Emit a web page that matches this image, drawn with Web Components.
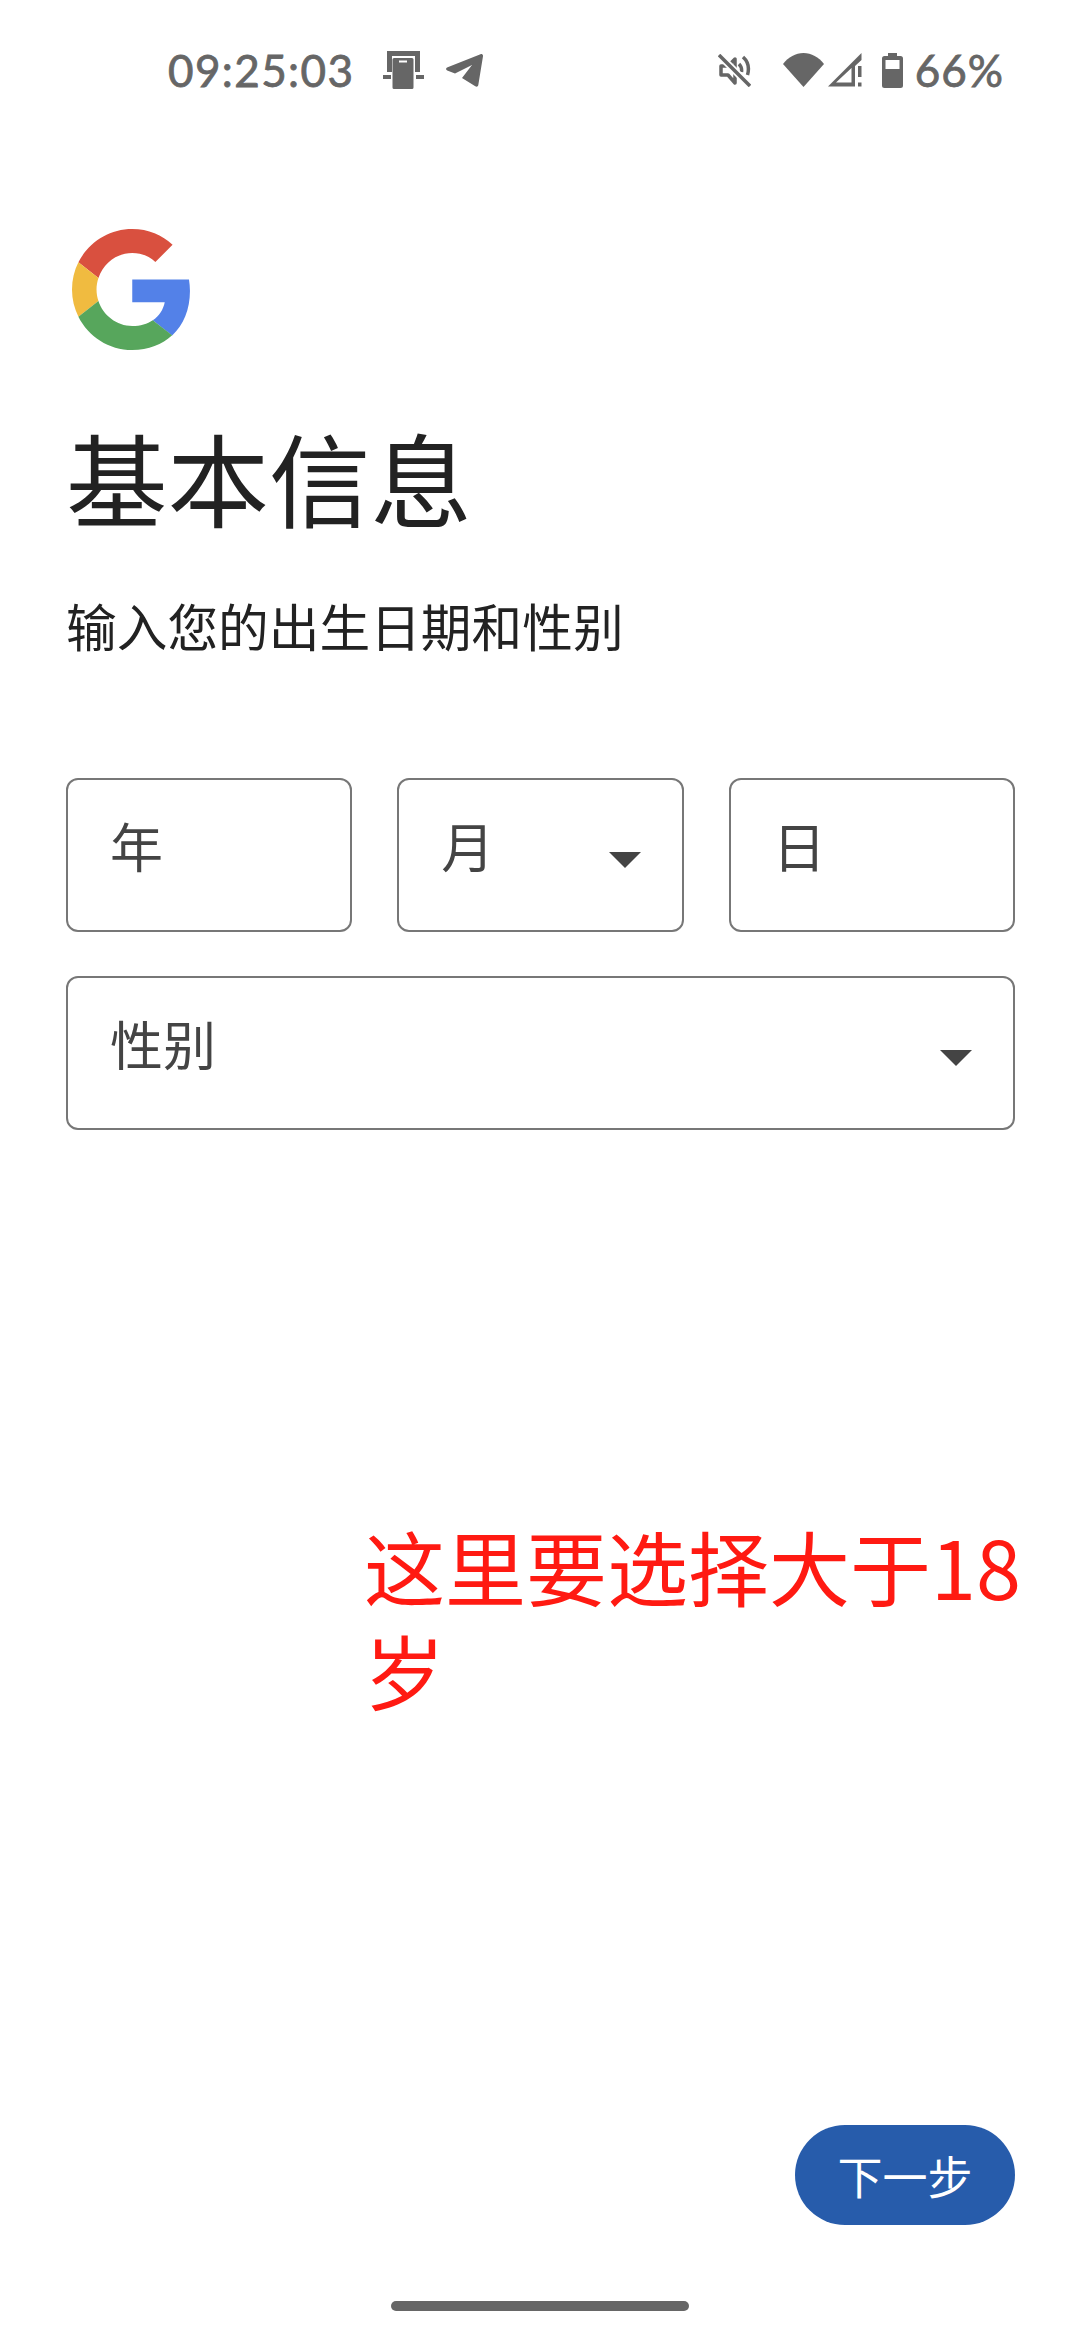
<!DOCTYPE html>
<html lang="zh-CN">
<head>
<meta charset="utf-8">
<title>基本信息</title>
<style>
  html, body { margin: 0; background: #fff; }
  body { font-family: "Noto Sans CJK SC", "Noto Sans", sans-serif; }
</style>
</head>
<body>
<signup-page>
  <status-bar slot="status" time="09:25:03" battery="66%"></status-bar>
  <span slot="title">基本信息</span>
  <span slot="subtitle">输入您的出生日期和性别</span>
  <date-row slot="form">
    <form-field>年</form-field>
    <form-field arrow>月</form-field>
    <form-field>日</form-field>
  </date-row>
  <form-field slot="form" arrow wide>性别</form-field>
  <span slot="note">这里要选择大于18岁</span>
  <pill-button slot="action">下一步</pill-button>
</signup-page>

<script>
// Top bar of the phone, the icons are drawn by hand
class StatusBar extends HTMLElement {
  constructor() {
    super();
    this._shadowRoot = this.attachShadow({ mode: 'open' });
  }
  connectedCallback() {
    this._shadowRoot.innerHTML = `
    <style>
      :host {
        display: flex;
        align-items: center;
        height: 140px;
        padding: 0 76px 0 168px;
        box-sizing: border-box;
        color: #666;
        font: 400 44px Lato, "Liberation Sans", sans-serif;
        -webkit-text-stroke: 0.8px #666;
      }
      svg { display: block; fill: #666; flex: none; }
      .time { letter-spacing: 1.4px; width: 182px; white-space: nowrap; }
      .pct { letter-spacing: 1px; margin-left: 12px; }
      .spacer { flex: 1; }
    </style>
    <span class="time">${this.getAttribute('time')}</span>
    <svg style="margin-left:33px" width="41" height="38" viewBox="0 0 41 38">
      <path d="M4 0h33v21h-5V5H9v16H4z"/><path d="M0 24h8v4H0zM33 24h8v4h-8z"/>
      <path fill-rule="evenodd" d="M11 7h18a1.500 1.500 0 0 1 1.500 1.500v28a1.500 1.500 0 0 1-1.500 1.500H11a1.500 1.500 0 0 1-1.500-1.500v-28A1.500 1.500 0 0 1 11 7zm5 2.500v2h8v-2z"/>
    </svg>
    <svg style="margin-left:22px" width="37" height="33" viewBox="0 0 37 33">
      <path d="M1 13.500L34.500.2C36 -.3 37.200.7 37 2.200L32.300 31C32 32.600 30.700 33.200 29.300 32.300L16 24 26 11 9 19.500 1.200 16.500C-.3 15.800-.3 14.200 1 13.500z"/>
    </svg>
    <span class="spacer"></span>
    <svg width="33" height="33" viewBox="0 0 33 33">
      <path fill="none" stroke="#666" stroke-width="3.500" stroke-linejoin="round" d="M3 12h7l7-7v24l-7-8H3z"/>
      <path fill="none" stroke="#666" stroke-width="3.500" d="M21 10c2 2 3 4.500 2.500 8M25 3c5 4.500 6.500 11 4.500 18"/>
      <path fill="none" stroke="#fff" stroke-width="7" d="M3 3l27 27"/>
      <path fill="none" stroke="#666" stroke-width="3.500" d="M1 1l31 31"/>
    </svg>
    <svg style="margin-left:32px" width="41" height="34" viewBox="0 0 41 34">
      <path d="M0 11C5.500 4 12.500 0 20.500 0S35.500 4 41 11L20.500 34z"/>
    </svg>
    <svg style="margin-left:4px" width="34" height="34" viewBox="0 0 34 34">
      <path fill-rule="evenodd" d="M0 33.500L33.500 0v7L27 13v20.500zM8 29.500h15.500V15z"/>
      <path d="M30 13h3.500v11H30zM30 29.500h3.500v4H30z"/>
    </svg>
    <svg style="margin-left:20px" width="21" height="35" viewBox="0 0 21 35">
      <path fill-rule="evenodd" d="M6 0h9v3h3.500A2.500 2.500 0 0 1 21 5.500V32.500A2.500 2.500 0 0 1 18.500 35h-16A2.500 2.500 0 0 1 0 32.500V5.500A2.500 2.500 0 0 1 2.500 3H6zM3.500 7v9h14V7z"/>
    </svg>
    <span class="pct">${this.getAttribute('battery')}</span>
    `;
  }
}

// Outlined field, with an optional dropdown arrow
class FormField extends HTMLElement {
  constructor() {
    super();
    this._shadowRoot = this.attachShadow({ mode: 'open' });
  }
  connectedCallback() {
    const arrow = this.hasAttribute('arrow')
      ? '<svg width="32" height="16" viewBox="0 0 32 16"><path d="M0 0h32L16 16z"/></svg>'
      : '';
    this._shadowRoot.innerHTML = `
    <style>
      :host {
        display: flex;
        justify-content: space-between;
        box-sizing: border-box;
        height: 154px;
        padding: 0 41px 0 42px;
        border: 2px solid #777;
        border-radius: 12px;
        color: #444;
        font-size: 53px;
        line-height: 72px;
      }
      .label { padding-top: 29px; }
      svg { display: block; fill: #444; margin-top: 72px; }
    </style>
    <span class="label"><slot></slot></span>
    ${arrow}
    `;
  }
}

class DateRow extends HTMLElement {
  constructor() {
    super();
    this._shadowRoot = this.attachShadow({ mode: 'open' });
    this._shadowRoot.innerHTML = `
    <style>
      :host {
        display: grid;
        grid-template-columns: repeat(3, 1fr);
        gap: 45px;
      }
    </style>
    <slot></slot>
    `;
  }
}

class PillButton extends HTMLElement {
  constructor() {
    super();
    this._shadowRoot = this.attachShadow({ mode: 'open' });
    this._shadowRoot.innerHTML = `
    <style>
      :host {
        display: flex;
        align-items: center;
        justify-content: center;
        width: 220px;
        height: 100px;
        border-radius: 50px;
        background: #275cab;
        color: #fff;
        font-size: 45px;
      }
    </style>
    <slot></slot>
    `;
  }
}

// Whole screen: header, form, and the footer pushed to the bottom
class SignupPage extends HTMLElement {
  constructor() {
    super();
    this._shadowRoot = this.attachShadow({ mode: 'open' });
    this._shadowRoot.innerHTML = `
    <style>
      :host {
        display: flex;
        flex-direction: column;
        position: relative;
        height: 2340px;
        overflow: hidden;
      }
      .logo { display: block; margin: 89px 0 0 72px; }
      .content { display: flex; flex-direction: column; padding: 0 65px 0 66px; }
      h1 {
        margin: 54px 0 0;
        font-size: 101.500px;
        line-height: 144px;
        font-weight: 400;
        color: #222;
      }
      p {
        margin: 41px 0 0;
        font-size: 50.700px;
        line-height: 72px;
        color: #222;
      }
      .form {
        display: flex;
        flex-direction: column;
        gap: 44px;
        margin-top: 117px;
      }
      .note {
        position: absolute;
        left: 364px;
        top: 1513px;
        width: 680px;
        color: #ff1a12;
        font-size: 81px;
        line-height: 104px;
      }
      .footer {
        display: flex;
        justify-content: flex-end;
        margin-top: auto;
        padding: 0 65px;
      }
      .home {
        align-self: center;
        width: 298px;
        height: 10px;
        margin: 76px 0 29px;
        border-radius: 5px;
        background: #666;
      }
    </style>
    <slot name="status"></slot>
    <svg class="logo" width="118" height="121" viewBox="0 0 47 48" preserveAspectRatio="none">
      <path fill="#d9503f" d="M24 9.500c3.540 0 6.710 1.220 9.210 3.600l6.850-6.850C35.900 2.380 30.470 0 24 0 14.620 0 6.510 5.380 2.560 13.220l7.980 6.190C12.430 13.720 17.740 9.500 24 9.500z"/>
      <path fill="#5381e8" d="M46.980 24.550c0-1.570-.15-3.090-.38-4.550H24v9.020h12.940c-.58 2.960-2.260 5.480-4.780 7.180l7.730 6c4.510-4.180 7.090-10.360 7.090-17.650z"/>
      <path fill="#f0bb40" d="M10.530 28.590c-.48-1.450-.76-2.990-.76-4.590s.27-3.140.76-4.590l-7.980-6.190C.92 16.460 0 20.120 0 24c0 3.880.92 7.540 2.560 10.780l7.970-6.190z"/>
      <path fill="#57a65c" d="M24 48c6.480 0 11.930-2.130 15.890-5.810l-7.730-6c-2.150 1.450-4.920 2.300-8.160 2.300-6.260 0-11.570-4.220-13.470-9.910l-7.980 6.190C6.510 42.620 14.620 48 24 48z"/>
    </svg>
    <div class="content">
      <h1><slot name="title"></slot></h1>
      <p><slot name="subtitle"></slot></p>
      <div class="form"><slot name="form"></slot></div>
    </div>
    <div class="note"><slot name="note"></slot></div>
    <div class="footer"><slot name="action"></slot></div>
    <div class="home"></div>
    `;
  }
}

customElements.define('status-bar', StatusBar);
customElements.define('form-field', FormField);
customElements.define('date-row', DateRow);
customElements.define('pill-button', PillButton);
customElements.define('signup-page', SignupPage);
</script>
</body>
</html>
